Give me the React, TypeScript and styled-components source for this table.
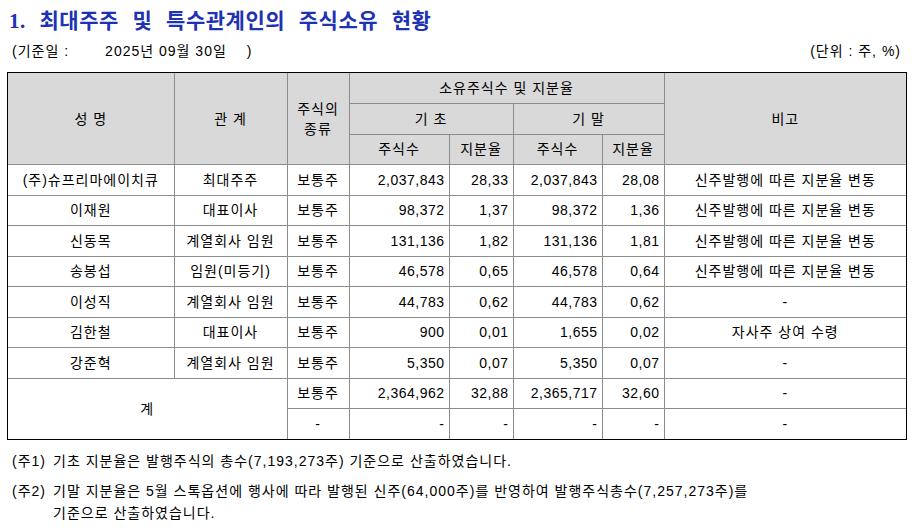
import * as React from "react";
import styled, { createGlobalStyle } from "styled-components";

const GlobalStyle = createGlobalStyle`
  html, body {
    margin: 0;
    padding: 0;
    background: #fff;
  }
  body {
    font-family: "Liberation Sans", "Noto Sans CJK KR", sans-serif;
    color: #000;
  }
`;

const Page = styled.div`
  width: 915px;
  padding: 0 8px 0 7px;
  box-sizing: border-box;
  letter-spacing: 1px;
`;

const Title = styled.h1`
  margin: 0;
  padding: 6px 0 0 2px;
  font-family: "Liberation Serif", "Noto Sans CJK KR", serif;
  font-size: 21px;
  font-weight: bold;
  line-height: 30px;
  color: #1e32b4;
  letter-spacing: 0.5px;
  word-spacing: 8px;
`;

const MetaRow = styled.div`
  display: flex;
  justify-content: space-between;
  margin: 5px 0 11px;
  padding: 0 6px 0 5px;
  font-size: 14px;
  line-height: 20px;
`;

const Gap = styled.span<{ $w: number }>`
  display: inline-block;
  width: ${p => p.$w}px;
`;

const Frame = styled.div`
  border: 1px solid #000;
`;

const Table = styled.table`
  width: 898px;
  border-collapse: collapse;
  border-style: hidden;
  table-layout: fixed;
  font-size: 14px;
`;

const Row = styled.tr`
  height: 30.5px;
`;

const Head = styled.th`
  border: 1px solid #8c8c8c;
  background: #d9d9d9;
  font-weight: normal;
  text-align: center;
  padding: 0;
  line-height: 20px;
`;

const Cell = styled.td<{ $align?: "left" | "center" | "right" }>`
  border: 1px solid #8c8c8c;
  padding: 0 ${p => (p.$align === "right" ? "4px" : "2px")} 0 2px;
  text-align: ${p => p.$align || "center"};
  letter-spacing: ${p => (p.$align === "right" ? "0.5px" : "1px")};
  white-space: nowrap;
  line-height: 20px;
`;

const Notes = styled.div`
  display: grid;
  grid-template-columns: 41px auto;
  row-gap: 8px;
  margin-top: 10px;
  padding-left: 5px;
  font-size: 14px;
  line-height: 22px;
`;

const NoteLabel = styled.span`
  white-space: nowrap;
`;

type Holder = {
  name: string;
  rel: string;
  kind: string;
  s1: string;
  r1: string;
  s2: string;
  r2: string;
  note: string;
};

const CHANGE = "신주발행에 따른 지분율 변동";

const holders: Holder[] = [
  { name: "(주)슈프리마에이치큐", rel: "최대주주", kind: "보통주", s1: "2,037,843", r1: "28,33", s2: "2,037,843", r2: "28,08", note: CHANGE },
  { name: "이재원", rel: "대표이사", kind: "보통주", s1: "98,372", r1: "1,37", s2: "98,372", r2: "1,36", note: CHANGE },
  { name: "신동목", rel: "계열회사 임원", kind: "보통주", s1: "131,136", r1: "1,82", s2: "131,136", r2: "1,81", note: CHANGE },
  { name: "송봉섭", rel: "임원(미등기)", kind: "보통주", s1: "46,578", r1: "0,65", s2: "46,578", r2: "0,64", note: CHANGE },
  { name: "이성직", rel: "계열회사 임원", kind: "보통주", s1: "44,783", r1: "0,62", s2: "44,783", r2: "0,62", note: "-" },
  { name: "김한철", rel: "대표이사", kind: "보통주", s1: "900", r1: "0,01", s2: "1,655", r2: "0,02", note: "자사주 상여 수령" },
  { name: "강준혁", rel: "계열회사 임원", kind: "보통주", s1: "5,350", r1: "0,07", s2: "5,350", r2: "0,07", note: "-" },
];

const widths = [166, 113, 62, 100, 64, 89, 62, 242];

export default function App() {
  return (
    <Page>
      <GlobalStyle />
      <Title>1. 최대주주 및 특수관계인의 주식소유 현황</Title>
      <MetaRow>
        <span>
          (기준일 :<Gap $w={36} />2025년 09월 30일<Gap $w={20} />)
        </span>
        <span>(단위 : 주, %)</span>
      </MetaRow>
      <Frame>
        <Table>
          <colgroup>
            {widths.map((w, i) => (
              <col key={i} style={{ width: w }} />
            ))}
          </colgroup>
          <thead>
            <Row>
              <Head rowSpan={3}>성 명</Head>
              <Head rowSpan={3}>관 계</Head>
              <Head rowSpan={3}>
                주식의
                <br />
                종류
              </Head>
              <Head colSpan={4}>소유주식수 및 지분율</Head>
              <Head rowSpan={3}>비고</Head>
            </Row>
            <Row>
              <Head colSpan={2}>기 초</Head>
              <Head colSpan={2}>기 말</Head>
            </Row>
            <Row>
              <Head>주식수</Head>
              <Head>지분율</Head>
              <Head>주식수</Head>
              <Head>지분율</Head>
            </Row>
          </thead>
          <tbody>
            {holders.map(h => (
              <Row key={h.name}>
                <Cell>{h.name}</Cell>
                <Cell>{h.rel}</Cell>
                <Cell>{h.kind}</Cell>
                <Cell $align="right">{h.s1}</Cell>
                <Cell $align="right">{h.r1}</Cell>
                <Cell $align="right">{h.s2}</Cell>
                <Cell $align="right">{h.r2}</Cell>
                <Cell>{h.note}</Cell>
              </Row>
            ))}
            <Row>
              <Cell colSpan={2} rowSpan={2}>계</Cell>
              <Cell>보통주</Cell>
              <Cell $align="right">2,364,962</Cell>
              <Cell $align="right">32,88</Cell>
              <Cell $align="right">2,365,717</Cell>
              <Cell $align="right">32,60</Cell>
              <Cell>-</Cell>
            </Row>
            <Row>
              <Cell>-</Cell>
              <Cell $align="right">-</Cell>
              <Cell $align="right">-</Cell>
              <Cell $align="right">-</Cell>
              <Cell $align="right">-</Cell>
              <Cell>-</Cell>
            </Row>
          </tbody>
        </Table>
      </Frame>
      <Notes>
        <NoteLabel>(주1)</NoteLabel>
        <span>기초 지분율은 발행주식의 총수(7,193,273주) 기준으로 산출하였습니다.</span>
        <NoteLabel>(주2)</NoteLabel>
        <span>
          기말 지분율은 5월 스톡옵션에 행사에 따라 발행된 신주(64,000주)를 반영하여 발행주식총수(7,257,273주)를
          <br />
          기준으로 산출하였습니다.
        </span>
      </Notes>
    </Page>
  );
}
